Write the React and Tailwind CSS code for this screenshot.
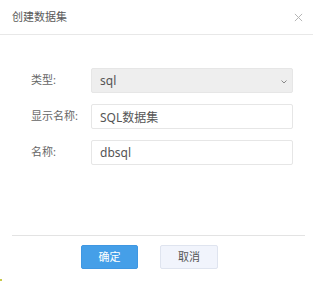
import React, { useState } from "react";

const font = { fontFamily: '"Noto Sans", "Noto Sans CJK SC", sans-serif' };

const App = () => {
  const [type, setType] = useState("sql");
  const [label, setLabel] = useState("SQL数据集");
  const [name, setName] = useState("dbsql");

  return (
    <div className="relative w-[313px] h-[281px] bg-white flex flex-col" style={font}>
      <div className="h-[35px] border-b border-[#e8e8e8] flex items-center justify-between pl-[12px] pr-[10px]">
        <span className="text-[11px] text-[#5a5a5a]">创建数据集</span>
        <svg width="9" height="9" viewBox="0 0 10 10" className="text-[#b5b5b5]">
          <path d="M1 1L9 9M9 1L1 9" stroke="currentColor" strokeWidth="1.1" />
        </svg>
      </div>

      <div className="flex flex-col gap-[11px] pt-[33px] pl-[31px] pr-[20px] h-[200px]">
        <div className="flex items-center h-[25px]">
          <span className="w-[60px] text-[11px] text-[#666]">类型:</span>
          <div className="relative w-[202px] h-[25px] bg-[#eeeeee] border border-[#e6e6e6] rounded-[2px] flex items-center">
            <select
              value={type}
              onChange={(e) => setType(e.target.value)}
              className="appearance-none w-full h-full bg-transparent pl-[8px] text-[12px] text-[#555] outline-none"
            >
              <option value="sql">sql</option>
            </select>
            <svg width="6" height="4" viewBox="0 0 6 4" className="absolute right-[5px] top-[11px] text-[#888]">
              <path d="M0.5 0.5L3 3L5.5 0.5" stroke="currentColor" strokeWidth="1" fill="none" />
            </svg>
          </div>
        </div>
        <div className="flex items-center h-[25px]">
          <span className="w-[60px] text-[11px] text-[#666]">显示名称:</span>
          <input
            value={label}
            onChange={(e) => setLabel(e.target.value)}
            className="w-[202px] h-[25px] border border-[#e6e6e6] rounded-[2px] pl-[8px] text-[12px] text-[#555] outline-none"
          />
        </div>
        <div className="flex items-center h-[25px]">
          <span className="w-[60px] text-[11px] text-[#666]">名称:</span>
          <input
            value={name}
            onChange={(e) => setName(e.target.value)}
            className="w-[202px] h-[25px] border border-[#e6e6e6] rounded-[2px] pl-[8px] text-[12px] text-[#555] outline-none"
          />
        </div>
      </div>

      <div className="ml-[12px] mr-[8px] border-t border-[#e3e3e3] flex gap-[22px] pl-[69px] pt-[9px]">
        <button className="w-[57px] h-[24px] bg-[#459fe8] border border-[#3f97e2] rounded-[2px] text-[11px] text-white">
          确定
        </button>
        <button className="w-[58px] h-[24px] bg-[#f1f4fc] border border-[#dfe4ef] rounded-[2px] text-[11px] text-[#555]">
          取消
        </button>
      </div>

      <div className="absolute left-0 bottom-0 w-[2px] h-[2px] bg-[#c9c94a]" />
    </div>
  );
};

export default App;
